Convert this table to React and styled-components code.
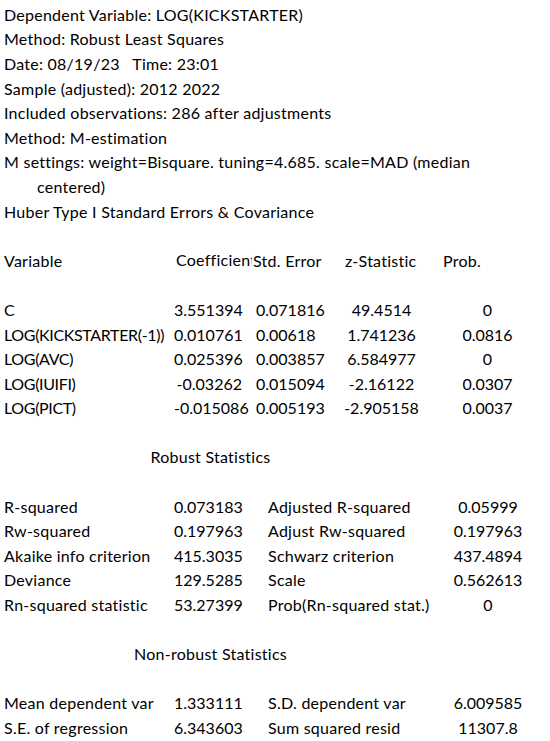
import React from "react";
import styled, { createGlobalStyle } from "styled-components";

const GlobalStyle = createGlobalStyle`
    html, body {
        margin: 0;
        padding: 0;
        background: #ffffff;
    }
`

const header = [
    "Dependent Variable: LOG(KICKSTARTER)",
    "Method: Robust Least Squares",
    "Date: 08/19/23   Time: 23:01",
    "Sample (adjusted): 2012 2022",
    "Included observations: 286 after adjustments",
    "Method: M-estimation",
    "M settings: weight=Bisquare. tuning=4.685. scale=MAD (median",
]

const coefs = [
    ["C", "3.551394", "0.071816", "49.4514", "0"],
    ["LOG(KICKSTARTER(-1))", "0.010761", "0.00618", "1.741236", "0.0816"],
    ["LOG(AVC)", "0.025396", "0.003857", "6.584977", "0"],
    ["LOG(IUIFI)", "-0.03262", "0.015094", "-2.16122", "0.0307"],
    ["LOG(PICT)", "-0.015086", "0.005193", "-2.905158", "0.0037"],
]

const robust = [
    ["R-squared", "0.073183", "Adjusted R-squared", "0.05999"],
    ["Rw-squared", "0.197963", "Adjust Rw-squared", "0.197963"],
    ["Akaike info criterion", "415.3035", "Schwarz criterion", "437.4894"],
    ["Deviance", "129.5285", "Scale", "0.562613"],
    ["Rn-squared statistic", "53.27399", "Prob(Rn-squared stat.)", "0"],
]

const nonRobust = [
    ["Mean dependent var", "1.333111", "S.D. dependent var", "6.009585"],
    ["S.E. of regression", "6.343603", "Sum squared resid", "11307.8"],
]

const StatRows = ({ rows }) => rows.map(r =>
    <Row key={r[0]}>
        <Cell>{r[0]}</Cell>
        <Num $align="right" $pad="0 10px 0 0">{r[1]}</Num>
        <Cell $span="3 / 5" $pad="0 0 0 16px">{r[2]}</Cell>
        <Num $align="center" $pad="0 1px 0 0">{r[3]}</Num>
    </Row>
)

const App = () => {
    return(
        <>
        <GlobalStyle />
        <Sheet>
            {header.map(line =>
                <Row key={line}><Cell $span="1 / -1">{line}</Cell></Row>
            )}
            <Row><Cell $span="1 / -1" $pad="0 0 0 37px">centered)</Cell></Row>
            <Row><Cell $span="1 / -1">Huber Type I Standard Errors &amp; Covariance</Cell></Row>
            <Row />

            <Row>
                <Cell>Variable</Cell>
                <ClipCell $pad="0 0 0 2px">Coefficient</ClipCell>
                <Cell $pad="0 0 0 1px">Std. Error</Cell>
                <Cell $pad="0 0 0 5px">z-Statistic</Cell>
                <Cell $pad="0 0 0 16px">Prob.</Cell>
            </Row>
            <Row />

            {coefs.map(r =>
                <Row key={r[0]}>
                    <VarName>{r[0]}</VarName>
                    <Num $align="right" $pad="0 10px 0 0">{r[1]}</Num>
                    <Num $pad="0 0 0 4px">{r[2]}</Num>
                    <Num $align="center" $pad="0 4px 0 0">{r[3]}</Num>
                    <Num $align="center" $pad="0 2px 0 0">{r[4]}</Num>
                </Row>
            )}
            <Row />

            <Row><Title>Robust Statistics</Title></Row>
            <Row />
            <StatRows rows={robust} />
            <Row />

            <Row><Title>Non-robust Statistics</Title></Row>
            <Row />
            <StatRows rows={nonRobust} />
        </Sheet>
        </>
    )
}

const Sheet = styled.div`
    display: flex;
    flex-direction: column;
    width: 550px;
    padding-top: 2px;
    font-family: Lato, "Liberation Sans", sans-serif;
    font-size: 16px;
    letter-spacing: 0.25px;
    color: #000;
`

const Row = styled.div`
    display: grid;
    grid-template-columns: 174px 78px 88px 87px 123px;
    align-items: center;
    height: 24.6px;
`

const Cell = styled.div`
    grid-column: ${p => p.$span || "auto"};
    padding: ${p => p.$pad || "0 0 0 4px"};
    text-align: ${p => p.$align || "left"};
    white-space: pre;
`

const ClipCell = styled(Cell)`
    overflow: hidden;
    line-height: 24.6px;
`

const VarName = styled(Cell)`
    letter-spacing: -0.35px;
`

const Num = styled(Cell)`
    letter-spacing: 0;
`

const Title = styled.div`
    grid-column: 1 / 5;
    text-align: center;
    padding-right: 6px;
    white-space: pre;
`

export default App
